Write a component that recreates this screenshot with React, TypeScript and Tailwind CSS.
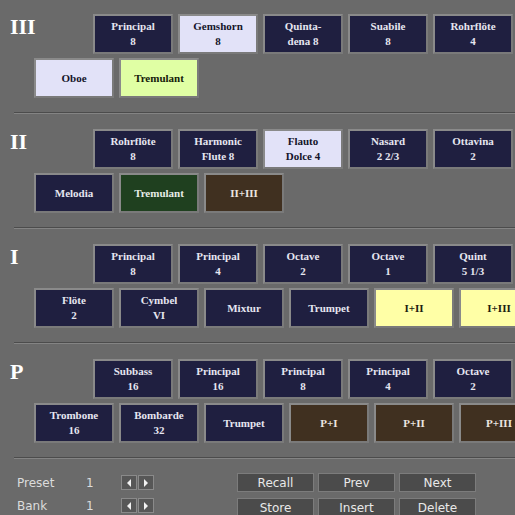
import React from 'react';

type Kind = 'off' | 'on' | 'trem' | 'tremOff' | 'coupler' | 'couplerOn';

type Stop = { name: string; sub?: string; kind?: Kind };

const kindClass: Record<Kind, string> = {
  off: 'bg-[#1f1f40] text-[#e6e6f0]',
  on: 'bg-[#e2e2f8] text-[#14142a]',
  trem: 'bg-[#e0ffa4] text-[#15200a]',
  tremOff: 'bg-[#1f401f] text-[#e6ece6]',
  coupler: 'bg-[#403020] text-[#ece6e0]',
  couplerOn: 'bg-[#ffffa6] text-[#202010]',
};

const divisions: { label: string; top: Stop[]; bottom: Stop[] }[] = [
  {
    label: 'III',
    top: [
      { name: 'Principal', sub: '8' },
      { name: 'Gemshorn', sub: '8', kind: 'on' },
      { name: 'Quinta-', sub: 'dena 8' },
      { name: 'Suabile', sub: '8' },
      { name: 'Rohrflöte', sub: '4' },
    ],
    bottom: [
      { name: 'Oboe', kind: 'on' },
      { name: 'Tremulant', kind: 'trem' },
    ],
  },
  {
    label: 'II',
    top: [
      { name: 'Rohrflöte', sub: '8' },
      { name: 'Harmonic', sub: 'Flute 8' },
      { name: 'Flauto', sub: 'Dolce 4', kind: 'on' },
      { name: 'Nasard', sub: '2 2/3' },
      { name: 'Ottavina', sub: '2' },
    ],
    bottom: [
      { name: 'Melodia' },
      { name: 'Tremulant', kind: 'tremOff' },
      { name: 'II+III', kind: 'coupler' },
    ],
  },
  {
    label: 'I',
    top: [
      { name: 'Principal', sub: '8' },
      { name: 'Principal', sub: '4' },
      { name: 'Octave', sub: '2' },
      { name: 'Octave', sub: '1' },
      { name: 'Quint', sub: '5 1/3' },
    ],
    bottom: [
      { name: 'Flöte', sub: '2' },
      { name: 'Cymbel', sub: 'VI' },
      { name: 'Mixtur' },
      { name: 'Trumpet' },
      { name: 'I+II', kind: 'couplerOn' },
      { name: 'I+III', kind: 'couplerOn' },
    ],
  },
  {
    label: 'P',
    top: [
      { name: 'Subbass', sub: '16' },
      { name: 'Principal', sub: '16' },
      { name: 'Principal', sub: '8' },
      { name: 'Principal', sub: '4' },
      { name: 'Octave', sub: '2' },
    ],
    bottom: [
      { name: 'Trombone', sub: '16' },
      { name: 'Bombarde', sub: '32' },
      { name: 'Trumpet' },
      { name: 'P+I', kind: 'coupler' },
      { name: 'P+II', kind: 'coupler' },
      { name: 'P+III', kind: 'coupler' },
    ],
  },
];

const serif = { fontFamily: '"Liberation Serif", "Times New Roman", serif' };
const sans = { fontFamily: '"DejaVu Sans", "Liberation Sans", sans-serif' };

const StopButton: React.FC<{ stop: Stop }> = ({ stop }) => (
  <button
    className={`flex h-[40px] w-[80px] shrink-0 flex-col items-center justify-center border-2 border-[#8a8a8a] border-b-[#7a7a7a] border-r-[#7a7a7a] text-[11px] font-bold leading-[15px] ${kindClass[stop.kind ?? 'off']}`}
    style={serif}
  >
    <span>{stop.name}</span>
    {stop.sub && <span>{stop.sub}</span>}
  </button>
);

const Divider = () => (
  <div className="ml-[14px] flex flex-col">
    <div className="h-px bg-[#4c4c4c]" />
    <div className="h-px bg-[#848484]" />
  </div>
);

const Arrow: React.FC<{ dir: 'left' | 'right' }> = ({ dir }) => (
  <button className="flex h-[15px] w-[16px] items-center justify-center border border-[#8a8a8a] bg-[#575757]">
    <svg width="6" height="8" viewBox="0 0 6 8">
      {dir === 'left' ? <polygon points="5,0 5,8 1,4" fill="#f2f2f2" /> : <polygon points="1,0 1,8 5,4" fill="#f2f2f2" />}
    </svg>
  </button>
);

const ActionButton: React.FC<{ label: string }> = ({ label }) => (
  <button
    className="flex h-[19px] w-[77px] items-center justify-center border border-[#7c7c7c] bg-[#4b4b4b] text-[12px] text-[#e8e8e8]"
    style={sans}
  >
    {label}
  </button>
);

export default function App() {
  return (
    <div className="h-[515px] w-[515px] overflow-hidden bg-[#6a6a6a]">
      <div className="pt-[14px]">
        {divisions.map((d) => (
          <div key={d.label}>
            <div className="flex flex-col gap-[4px]">
              <div className="flex flex-nowrap">
                <div
                  className="w-[93px] shrink-0 pl-[10px] pt-[2px] text-[22px] font-bold leading-none text-white"
                  style={serif}
                >
                  {d.label}
                </div>
                <div className="flex flex-nowrap gap-[5px]">
                  {d.top.map((s, i) => (
                    <StopButton key={i} stop={s} />
                  ))}
                </div>
              </div>
              <div className="flex flex-nowrap gap-[5px] pl-[34px]">
                {d.bottom.map((s, i) => (
                  <StopButton key={i} stop={s} />
                ))}
              </div>
            </div>
            <div className="pb-[15px] pt-[14px]">
              <Divider />
            </div>
          </div>
        ))}
      </div>
      <div className="-mt-[1px] flex items-start">
        <div className="mt-[2px] flex w-[237px] shrink-0 flex-col gap-[8px] pl-[17px] text-[12px] text-[#dcdcdc]" style={sans}>
          {['Preset', 'Bank'].map((l) => (
            <div key={l} className="flex h-[15px] items-center">
              <span className="w-[69px]">{l}</span>
              <span className="w-[35px]">1</span>
              <div className="flex gap-px">
                <Arrow dir="left" />
                <Arrow dir="right" />
              </div>
            </div>
          ))}
        </div>
        <div className="grid grid-cols-[77px_77px_77px] gap-x-[4px] gap-y-[6px]">
          {['Recall', 'Prev', 'Next', 'Store', 'Insert', 'Delete'].map((l) => (
            <ActionButton key={l} label={l} />
          ))}
        </div>
      </div>
    </div>
  );
}
